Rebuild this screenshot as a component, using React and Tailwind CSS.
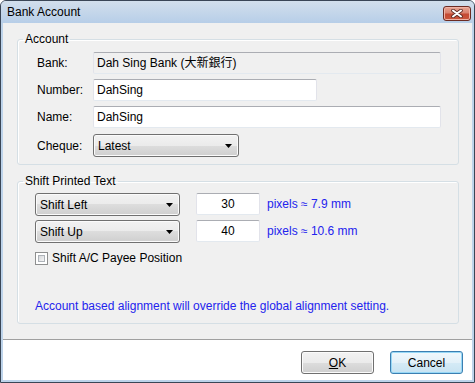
import React from 'react';

const font = "font-['Liberation_Sans','Noto_Sans_CJK_TC',Arial,sans-serif]";

// win7 style text box
function TextBox({ value, width, readOnly, center }) {
  return (
    <div
      className={
        'h-[22px] flex items-center rounded-[2px] border border-[#e2e3ea] border-t-[#abadb3] border-b-[#e3e9ef] ' +
        (readOnly ? 'bg-[#f0f0f0] ' : 'bg-white ') +
        (center ? 'justify-center ' : 'pl-[3px] ')
      }
      style={{ width }}
    >
      <span className="leading-[14px] text-black">{value}</span>
    </div>
  );
}

function Combo({ value, width }) {
  return (
    <div
      className="h-[23px] flex items-center justify-between pl-[4px] pr-[6px] rounded-[3px] border border-[#707070] shadow-[inset_0_0_0_1px_#fbfbfb] bg-[linear-gradient(to_bottom,#f2f2f2_0%,#ebebeb_50%,#dddddd_50%,#cfcfcf_100%)]"
      style={{ width }}
    >
      <span className="leading-[14px]">{value}</span>
      <svg width="7" height="4" viewBox="0 0 7 4">
        <path d="M0 0h7L3.5 4z" fill="#000" />
      </svg>
    </div>
  );
}

function Row({ label, children, className }) {
  return (
    <div className={'flex items-center ' + (className || '')}>
      <span className="w-[56px] leading-[14px]">{label}</span>
      {children}
    </div>
  );
}

function Button({ children, isDefault }) {
  return (
    <button
      className={
        'w-[73px] h-[23px] rounded-[3px] border text-black leading-[14px] ' +
        (isDefault
          ? 'border-[#3c7fb1] shadow-[inset_0_0_0_1px_#97d8f6] bg-[linear-gradient(to_bottom,#f1f8fc_0%,#e3f1f9_50%,#d5ebf6_50%,#c8e3f2_100%)]'
          : 'border-[#707070] shadow-[inset_0_0_0_1px_#fbfbfb] bg-[linear-gradient(to_bottom,#f2f2f2_0%,#ebebeb_50%,#dddddd_50%,#cfcfcf_100%)]')
      }
    >
      {children}
    </button>
  );
}

export default function App() {
  return (
    <div className={'w-[475px] h-[383px] flex flex-col border border-[#3a4656] rounded-t-[6px] bg-[#bdd3ea] px-[2px] pb-[2px] text-[12px] text-black ' + font}>
      {/* title bar */}
      <div className="h-[22px] -mx-[2px] px-[6px] pr-[3px] flex items-center justify-between rounded-t-[5px] bg-linear-to-b from-[#d2dfec] to-[#b7cee8]">
        <span className="leading-[14px] text-black">Bank Account</span>
        <div className="w-[28px] h-[15px] mt-[2px] flex items-center justify-center rounded-[3px] border border-[#6c2b22] shadow-[inset_0_0_0_1px_#efb3a6] bg-[linear-gradient(to_bottom,#e8a593_0%,#d9826f_45%,#c54a33_55%,#c8563c_100%)]">
          <svg width="12" height="9" viewBox="0 0 12 9">
            <path d="M2 1.5l8 6M10 1.5l-8 6" stroke="#5a2a24" strokeWidth="3.6" strokeLinecap="round" />
            <path d="M2 1.5l8 6M10 1.5l-8 6" stroke="#fff" strokeWidth="2" strokeLinecap="round" />
          </svg>
        </div>
      </div>

      {/* dialog body */}
      <div className="h-[316px] bg-[#f0f0f0] flex flex-col px-[14px] pr-[13px]">
        <fieldset className="mt-[9px] border border-[#d5dfe5] rounded-[3px] shadow-[inset_1px_1px_0_#fff]">
          <legend className="ml-[5px] px-[2px] leading-[14px]">Account</legend>
          <div className="pl-[19px] pt-[6px] pb-[7px] flex flex-col">
            <Row label="Bank:">
              <TextBox value="Dah Sing Bank (大新銀行)" width={348} readOnly />
            </Row>
            <Row label="Number:" className="mt-[5px]">
              <TextBox value="DahSing" width={224} />
            </Row>
            <Row label="Name:" className="mt-[5px]">
              <TextBox value="DahSing" width={348} />
            </Row>
            <Row label="Cheque:" className="mt-[6px]">
              <Combo value="Latest" width={146} />
            </Row>
          </div>
        </fieldset>

        <fieldset className="mt-[9px] border border-[#d5dfe5] rounded-[3px] shadow-[inset_1px_1px_0_#fff]">
          <legend className="ml-[5px] px-[2px] leading-[14px]">Shift Printed Text</legend>
          <div className="pl-[17px] pt-[5px] pb-[10px] flex flex-col">
            <div className="flex items-start">
              <Combo value="Shift Left" width={145} />
              <div className="ml-[16px]">
                <TextBox value="30" width={64} center />
              </div>
              <span className="ml-[7px] mt-[4px] leading-[14px] text-[#2323ee]">pixels ≈ 7.9 mm</span>
            </div>
            <div className="flex items-start mt-[4px]">
              <Combo value="Shift Up" width={145} />
              <div className="ml-[16px]">
                <TextBox value="40" width={64} center />
              </div>
              <span className="ml-[7px] mt-[4px] leading-[14px] text-[#2323ee]">pixels ≈ 10.6 mm</span>
            </div>
            <label className="mt-[8px] flex items-center h-[14px]">
              <span className="w-[13px] h-[13px] border border-[#8e8f8f] bg-white p-[2px] flex">
                <span className="flex-1 border border-[#aeb3b9] bg-linear-to-br from-[#d6d8db] to-[#f6f6f6]" />
              </span>
              <span className="ml-[4px] leading-[14px]">Shift A/C Payee Position</span>
            </label>
            <p className="mt-[34px] leading-[14px] text-[#2323ee]">
              Account based alignment will override the global alignment setting.
            </p>
          </div>
        </fieldset>
      </div>

      {/* footer */}
      <div className="h-[1px] bg-[#a0a0a0]" />
      <div className="flex-1 bg-white flex justify-end items-start pt-[11px] pr-[9px] gap-[16px]">
        <Button>
          <span className="underline">O</span>K
        </Button>
        <Button isDefault>Cancel</Button>
      </div>
    </div>
  );
}
